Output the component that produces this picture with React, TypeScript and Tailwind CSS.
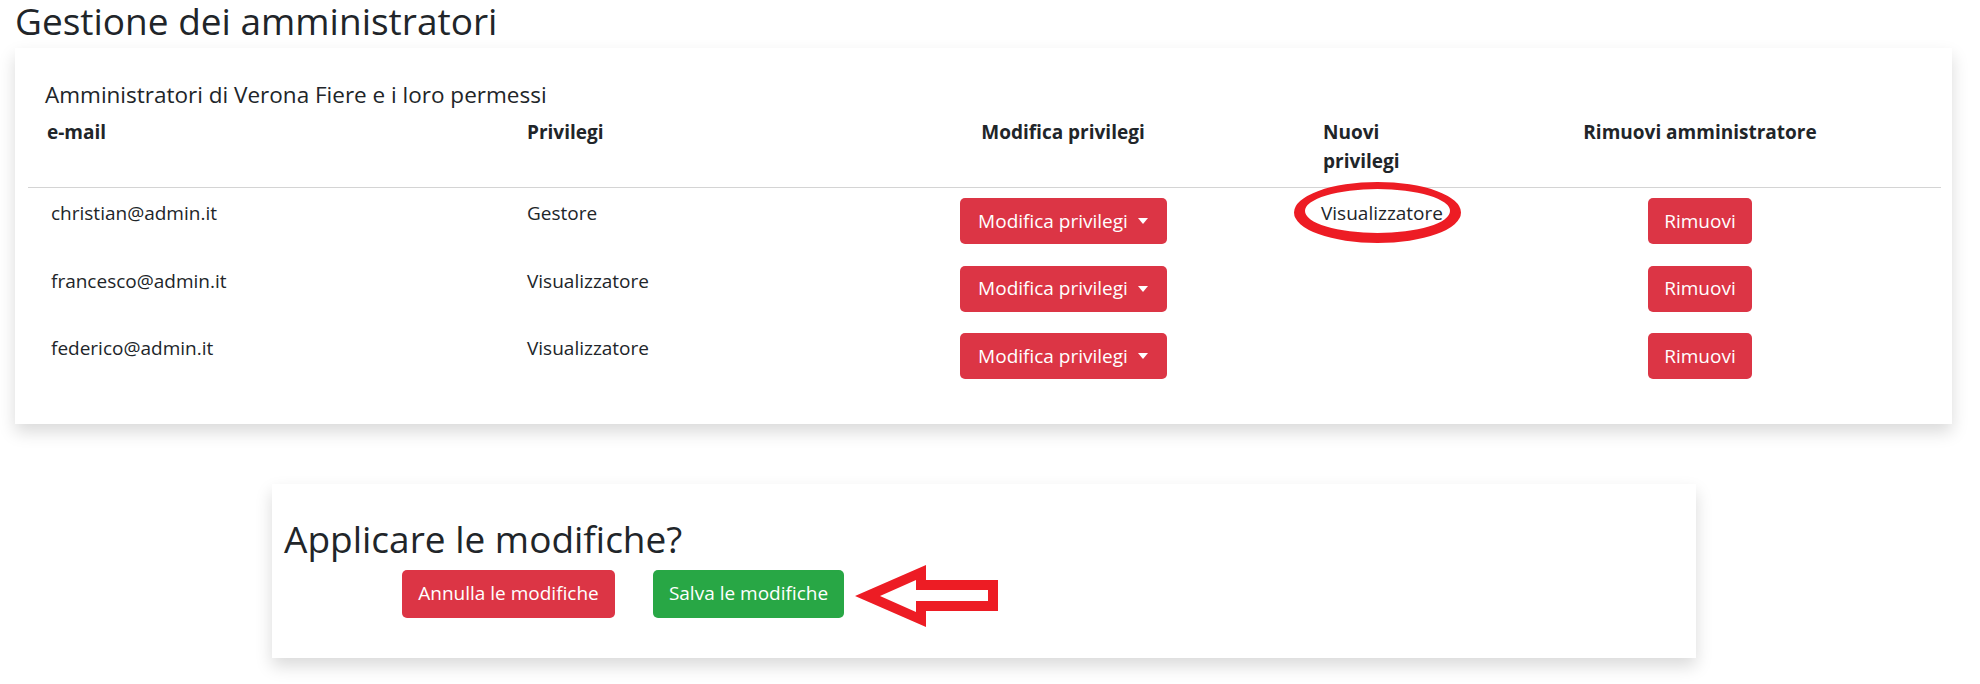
const admins = [
  { email: "christian@admin.it", role: "Gestore", next: "Visualizzatore" },
  { email: "francesco@admin.it", role: "Visualizzatore" },
  { email: "federico@admin.it", role: "Visualizzatore" },
];

const cols = "grid grid-cols-[480px_314px_482px_155px_482px]";

function Caret() {
  return (
    <span className="ml-[10px] inline-block h-0 w-0 border-x-[5.5px] border-t-[6px] border-x-transparent border-t-white align-middle" />
  );
}

function CircleMark() {
  return (
    <svg
      className="pointer-events-none absolute left-[-10px] top-[-6px]"
      width="167"
      height="61"
      viewBox="0 0 167 61"
    >
      <path
        fill="#ed1c24"
        fillRule="evenodd"
        d="M0 30.5A83.5 30.5 0 1 0 167 30.5A83.5 30.5 0 1 0 0 30.5ZM11 29A72.5 22 0 1 0 156 29A72.5 22 0 1 0 11 29Z"
      />
    </svg>
  );
}

function ArrowMark() {
  return (
    <svg width="143" height="62" viewBox="0 0 143 62" className="-mb-[9px] -mt-[5px] ml-[11px]">
      <path
        fill="#ed1c24"
        fillRule="evenodd"
        d="M0 31L71 0L71 15L143 15L143 46L71 46L71 62ZM25 31L61 15L61 25L133 25L133 36L61 36L61 47Z"
      />
    </svg>
  );
}

export default function App() {
  return (
    <div className="min-h-[684px] bg-white pl-[15px] pt-[2px] font-['Open_Sans',sans-serif] text-[19px] text-[#212529]">
      <h2 className="text-[37px] font-medium leading-[38px]">Gestione dei amministratori</h2>

      <div className="mt-[8px] w-[1937px] bg-white pb-[33px] pl-[13px] pr-[11px] pt-[34px] shadow-[0_8px_16px_rgba(0,0,0,0.15)]">
        <h5 className="pl-[17px] text-[22.5px] leading-[26px]">
          Amministratori di Verona Fiere e i loro permessi
        </h5>

        <div className={`${cols} border-b border-[#d4d4d4] pb-[11px] pt-[10px] font-bold leading-[29px]`}>
          <div className="pl-[19px]">e-mail</div>
          <div className="pl-[19px]">Privilegi</div>
          <div className="text-center">Modifica privilegi</div>
          <div className="px-[19px]">Nuovi privilegi</div>
          <div className="text-center">Rimuovi amministratore</div>
        </div>

        {admins.map((a) => (
          <div key={a.email} className={`${cols} h-[67.5px] items-start leading-[27px]`}>
            <div className="pl-[23px] pt-[12px]">{a.email}</div>
            <div className="pl-[19px] pt-[12px]">{a.role}</div>
            <div className="flex justify-center pt-[10px]">
              <button className="flex h-[46px] w-[207px] items-center justify-center rounded-[5px] bg-[#dc3545] text-white">
                Modifica privilegi
                <Caret />
              </button>
            </div>
            <div className="relative pl-[17px] pt-[12px]">
              {a.next && (
                <>
                  <span className="relative">{a.next}</span>
                  <CircleMark />
                </>
              )}
            </div>
            <div className="flex justify-center pt-[10px]">
              <button className="h-[46px] w-[104px] rounded-[5px] bg-[#dc3545] text-white">Rimuovi</button>
            </div>
          </div>
        ))}
      </div>

      <div className="ml-[257px] mt-[60px] w-[1424px] bg-white pb-[40px] pl-[12px] pt-[35px] shadow-[0_8px_16px_rgba(0,0,0,0.15)]">
        <h2 className="text-[37px] font-medium leading-[40px]">Applicare le modifiche?</h2>
        <div className="ml-[118px] mt-[11px] flex items-start">
          <button className="h-[48px] w-[213px] rounded-[5px] bg-[#dc3545] text-white">Annulla le modifiche</button>
          <button className="ml-[38px] h-[48px] w-[191px] rounded-[5px] bg-[#28a745] text-white">Salva le modifiche</button>
          <ArrowMark />
        </div>
      </div>
    </div>
  );
}
